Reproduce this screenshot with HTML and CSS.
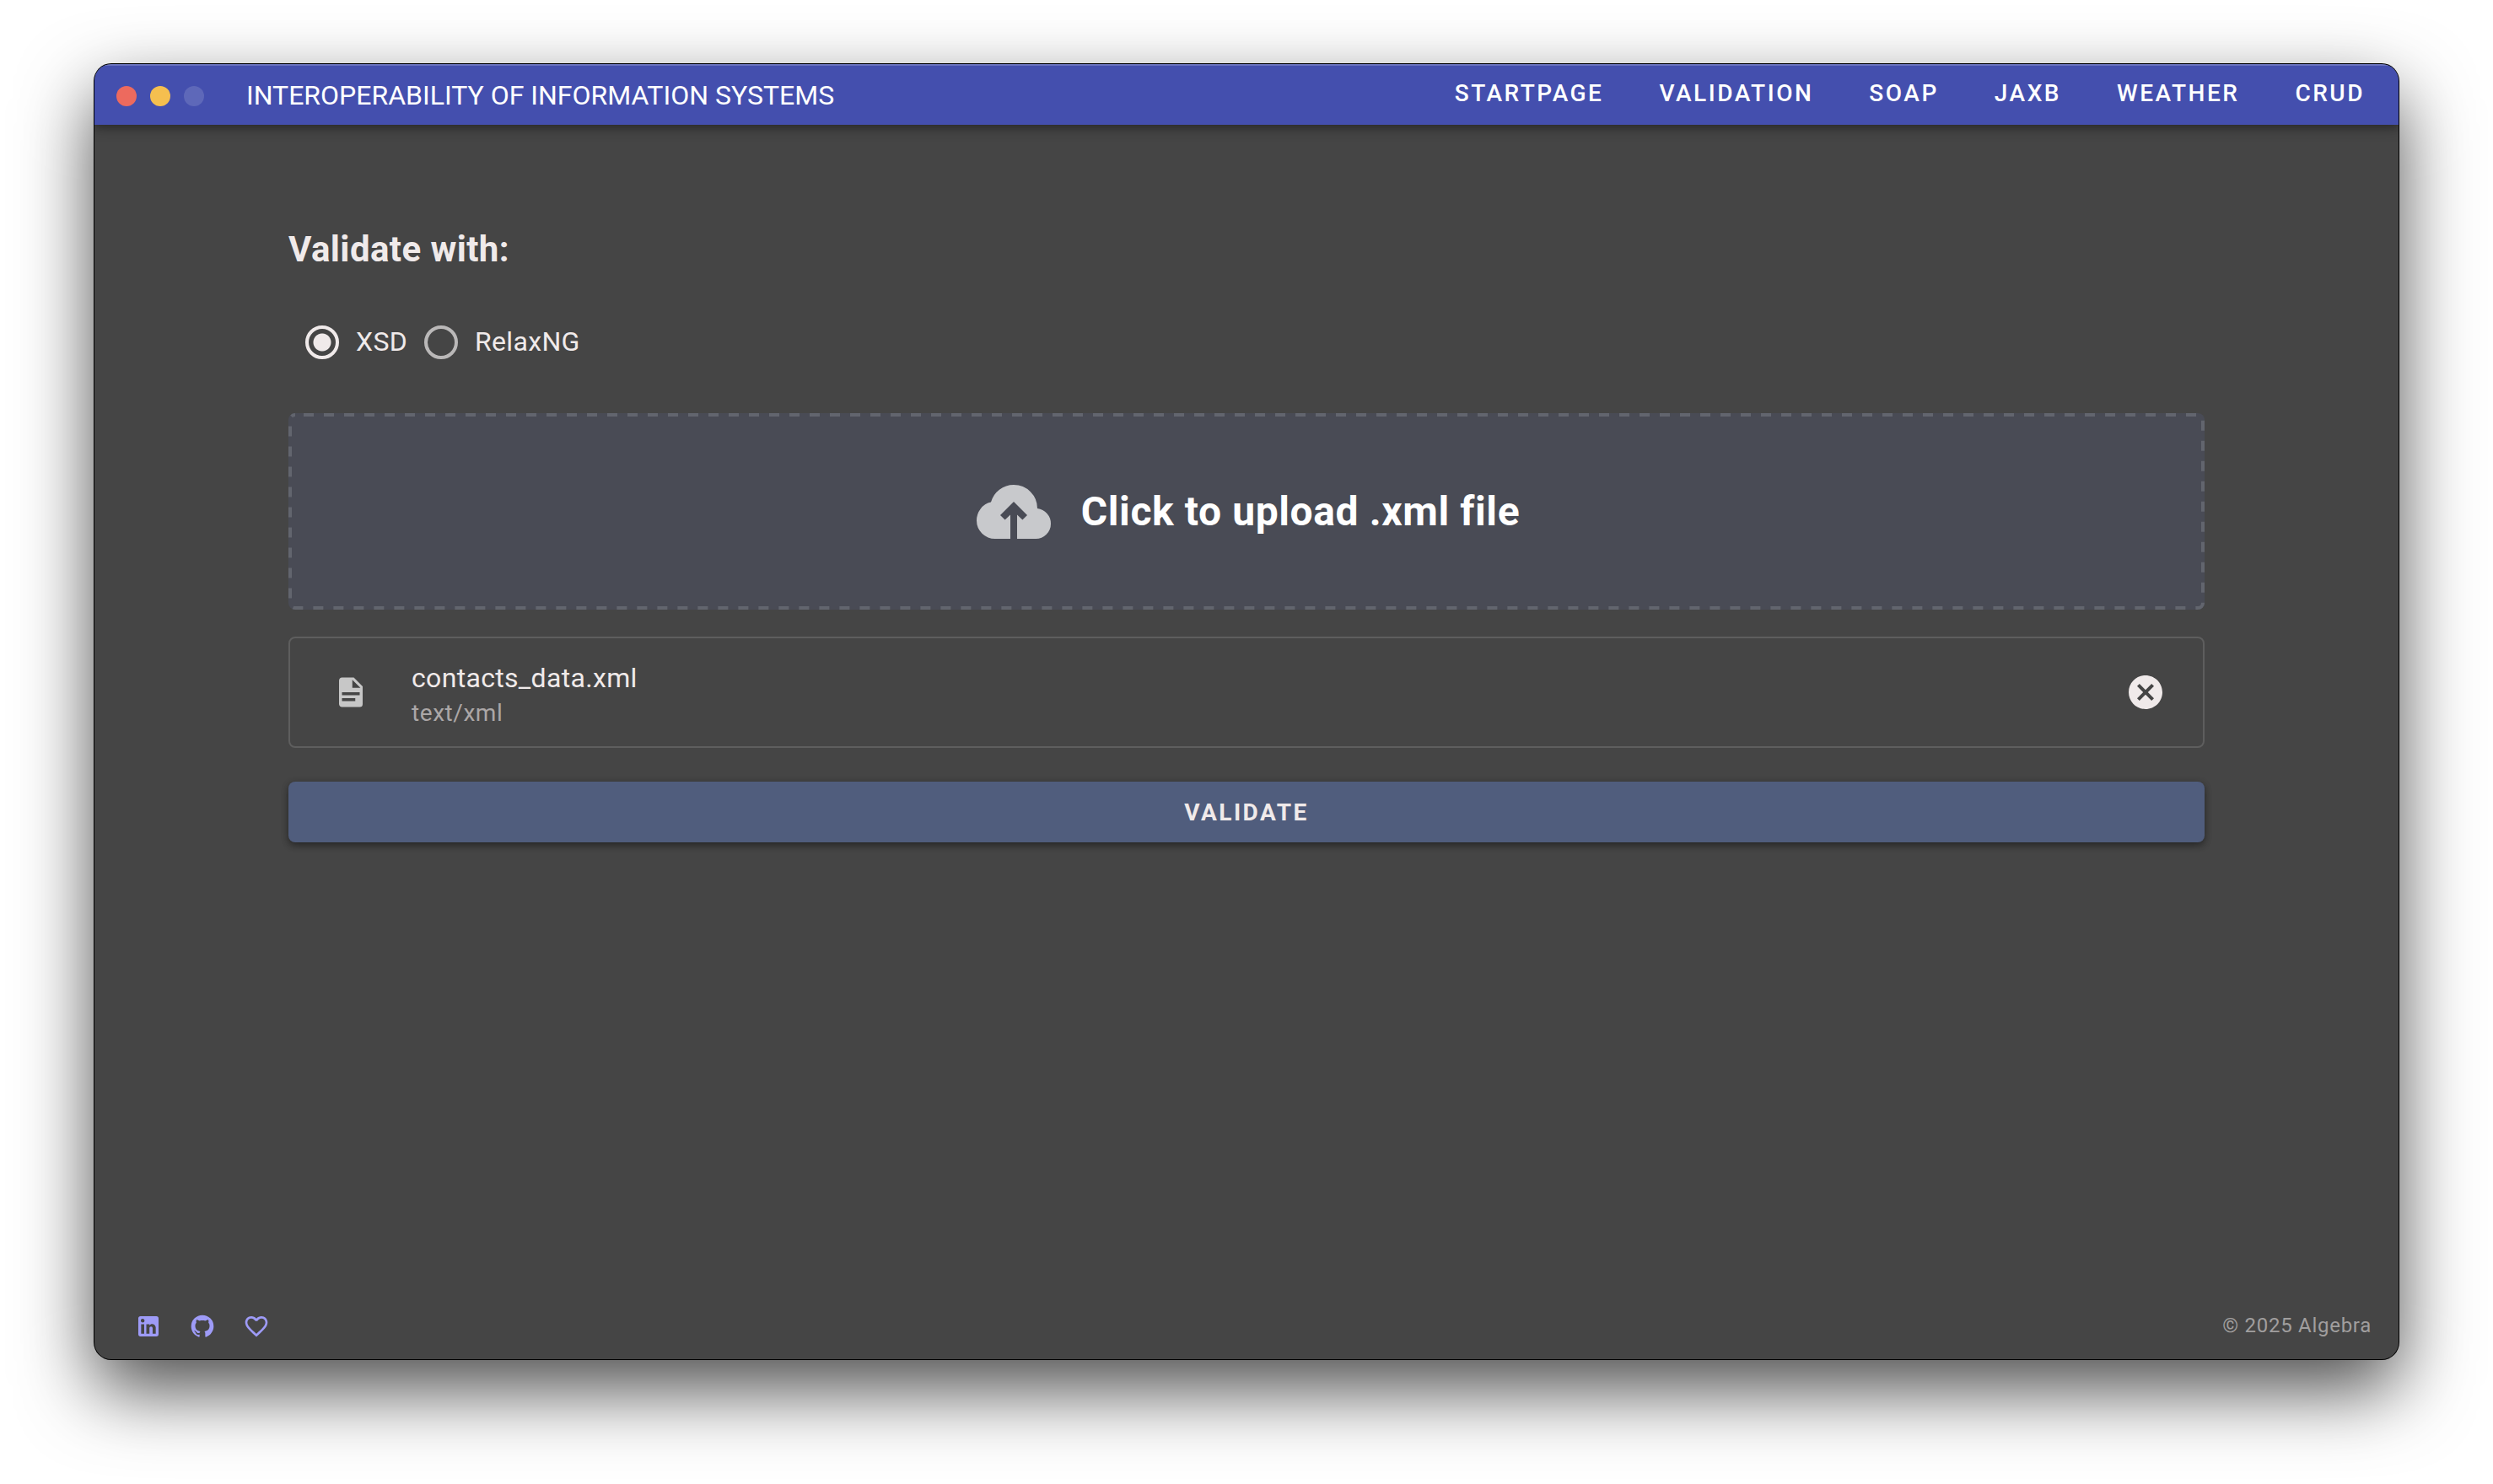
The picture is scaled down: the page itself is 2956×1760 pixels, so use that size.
FILE: index.html
```html
<!DOCTYPE html>
<html lang="en">
<head>
  <meta charset="utf-8">
  <meta name="viewport" content="width=device-width, initial-scale=1">
  <title>Interoperability of Information Systems</title>
  <link rel="stylesheet" href="styles.css">
</head>
<body>
  <div class="window">
    <header class="app-bar">
      <div class="window-controls">
        <button class="dot dot-close" type="button" aria-label="Close"></button>
        <button class="dot dot-minimize" type="button" aria-label="Minimize"></button>
        <button class="dot dot-zoom" type="button" aria-label="Zoom" disabled></button>
      </div>
      <div class="app-title">INTEROPERABILITY OF INFORMATION SYSTEMS</div>
      <nav class="nav">
        <a class="nav-link" href="#startpage">STARTPAGE</a>
        <a class="nav-link" href="#validation">VALIDATION</a>
        <a class="nav-link" href="#soap">SOAP</a>
        <a class="nav-link" href="#jaxb">JAXB</a>
        <a class="nav-link" href="#weather">WEATHER</a>
        <a class="nav-link" href="#crud">CRUD</a>
      </nav>
    </header>

    <main class="content">
      <h1 class="heading" id="validate-with">Validate with:</h1>
      <div class="radio-group" role="radiogroup" aria-labelledby="validate-with">
        <label class="radio"><input class="radio-input" type="radio" name="schema" value="xsd" checked><span class="radio-text">XSD</span></label>
        <label class="radio"><input class="radio-input" type="radio" name="schema" value="relaxng"><span class="radio-text">RelaxNG</span></label>
      </div>

      <button class="upload" type="button">
        <svg class="upload-outline" aria-hidden="true"><rect width="100%" height="100%" rx="6"/></svg>
        <svg class="upload-icon" viewBox="0 0 24 24" aria-hidden="true"><path d="M11 20H6.5q-2.28 0-3.89-1.57Q1 16.85 1 14.58q0-1.95 1.17-3.48 1.18-1.53 3.08-1.95.63-2.3 2.5-3.72Q9.63 4 12 4q2.93 0 4.96 2.04Q19 8.07 19 11q1.73.2 2.86 1.5 1.14 1.28 1.14 3 0 1.88-1.31 3.19T18.5 20H13v-7.15l1.6 1.55L16 13l-4-4-4 4 1.4 1.4 1.6-1.55Z"/></svg>
        <span>Click to upload .xml file</span>
      </button>

      <div class="file">
        <svg class="file-icon" viewBox="0 0 24 24" aria-hidden="true"><path d="M13,9H18.5L13,3.5V9M6,2H14L20,8V20A2,2 0 0,1 18,22H6C4.89,22 4,21.1 4,20V4C4,2.89 4.89,2 6,2M15,18V16H6V18H15M18,14V12H6V14H18Z"/></svg>
        <div class="file-text">
          <div class="file-name">contacts_data.xml</div>
          <div class="file-type">text/xml</div>
        </div>
        <button class="file-remove" type="button" aria-label="Remove file">
          <svg class="remove-icon" viewBox="0 0 24 24" aria-hidden="true"><path d="M12,2C17.53,2 22,6.47 22,12C22,17.53 17.53,22 12,22C6.47,22 2,17.53 2,12C2,6.47 6.47,2 12,2M15.59,7L12,10.59L8.41,7L7,8.41L10.59,12L7,15.59L8.41,17L12,13.41L15.59,17L17,15.59L13.41,12L17,8.41L15.59,7Z"/></svg>
        </button>
      </div>

      <button class="submit" type="button">VALIDATE</button>
    </main>

    <footer class="footer">
      <div class="social">
        <a class="social-link" href="#linkedin" aria-label="LinkedIn"><svg class="social-icon" viewBox="0 0 24 24" aria-hidden="true"><path d="M19 3A2 2 0 0 1 21 5V19A2 2 0 0 1 19 21H5A2 2 0 0 1 3 19V5A2 2 0 0 1 5 3H19M18.5 18.5V13.2A3.26 3.26 0 0 0 15.24 9.94C14.39 9.94 13.4 10.46 12.92 11.24V10.13H10.13V18.5H12.92V13.57C12.92 12.8 13.54 12.17 14.31 12.17A1.4 1.4 0 0 1 15.71 13.57V18.5H18.5M6.88 8.56A1.68 1.68 0 0 0 8.56 6.88C8.56 5.95 7.81 5.19 6.88 5.19A1.69 1.69 0 0 0 5.19 6.88C5.19 7.81 5.95 8.56 6.88 8.56M8.27 18.5V10.13H5.5V18.5H8.27Z"/></svg></a>
        <a class="social-link" href="#github" aria-label="GitHub"><svg class="social-icon" viewBox="0 0 24 24" aria-hidden="true"><path d="M12,2A10,10 0 0,0 2,12C2,16.42 4.87,20.17 8.84,21.5C9.34,21.58 9.5,21.27 9.5,21C9.5,20.77 9.5,20.14 9.5,19.31C6.73,19.91 6.14,17.97 6.14,17.97C5.68,16.81 5.03,16.5 5.03,16.5C4.12,15.88 5.1,15.9 5.1,15.9C6.1,15.97 6.63,16.93 6.63,16.93C7.5,18.45 8.97,18 9.54,17.76C9.63,17.11 9.89,16.67 10.17,16.42C7.95,16.17 5.62,15.31 5.62,11.5C5.62,10.39 6,9.5 6.65,8.79C6.55,8.54 6.2,7.5 6.75,6.15C6.75,6.15 7.59,5.88 9.5,7.17C10.29,6.95 11.15,6.84 12,6.84C12.85,6.84 13.71,6.95 14.5,7.17C16.41,5.88 17.25,6.15 17.25,6.15C17.8,7.5 17.45,8.54 17.35,8.79C18,9.5 18.38,10.39 18.38,11.5C18.38,15.32 16.04,16.16 13.81,16.41C14.17,16.72 14.5,17.33 14.5,18.26C14.5,19.6 14.5,20.68 14.5,21C14.5,21.27 14.66,21.59 15.17,21.5C19.14,20.16 22,16.42 22,12A10,10 0 0,0 12,2Z"/></svg></a>
        <a class="social-link" href="#favorite" aria-label="Favorite"><svg class="social-icon" viewBox="0 0 24 24" aria-hidden="true"><path d="M12.1,18.55L12,18.65L11.89,18.55C7.14,14.24 4,11.39 4,8.5C4,6.5 5.5,5 7.5,5C9.04,5 10.54,6 11.07,7.36H12.93C13.46,6 14.96,5 16.5,5C18.5,5 20,6.5 20,8.5C20,11.39 16.86,14.24 12.1,18.55M16.5,3C14.76,3 13.09,3.81 12,5.08C10.91,3.81 9.24,3 7.5,3C4.42,3 2,5.41 2,8.5C2,12.27 5.4,15.36 10.55,20.03L12,21.35L13.45,20.03C18.6,15.36 22,12.27 22,8.5C22,5.41 19.58,3 16.5,3Z"/></svg></a>
      </div>
      <div class="copyright">© 2025 Algebra</div>
    </footer>
  </div>
</body>
</html>
```
FILE: styles.css
```css
*,
*::before,
*::after {
  box-sizing: border-box;
}

body {
  margin: 0;
  padding: 76px 112px 148px;
  background: #fff;
  color: #f0eaea;
  font: 400 32px/48px Roboto, sans-serif;
}

button {
  margin: 0;
  padding: 0;
  border: 0;
  background: none;
  color: inherit;
  font: inherit;
}

svg {
  display: block;
  fill: currentColor;
}

.window {
  display: flex;
  flex-direction: column;
  min-height: calc(100vh - 224px);
  overflow: hidden;
  border-radius: 20px;
  background: #454545;
  box-shadow: 0 0 0 1px #000, 0 36px 88px rgba(0, 0, 0, 0.7);
}

/* Title bar */

.app-bar {
  display: flex;
  align-items: center;
  height: 72px;
  padding: 0 8px 0 26px;
  background: #444fae;
  color: #fff;
  box-shadow: inset 0 2px 0 rgba(255, 255, 255, 0.2), 0 4px 8px rgba(0, 0, 0, 0.2), 0 4px 16px rgba(0, 0, 0, 0.24);
}

.window-controls {
  display: flex;
  gap: 16px;
  padding-top: 4px;
}

.dot {
  width: 24px;
  height: 24px;
  border-radius: 50%;
}

.dot-close {
  background: #ed6a5e;
}

.dot-minimize {
  background: #f5bf4f;
}

.dot-zoom {
  background: #5e68b9;
}

.app-title {
  padding: 2px 0 0 50px;
}

.nav {
  display: flex;
  gap: 2px;
  margin-left: auto;
  padding-bottom: 2px;
}

.nav-link {
  padding: 0 32px;
  color: inherit;
  font-size: 28px;
  font-weight: 500;
  letter-spacing: 0.09em;
  text-decoration: none;
}

/* Validation form */

.content {
  display: flex;
  flex: 1;
  flex-direction: column;
  padding: 116px 230px 64px;
}

.heading {
  margin: 0 0 38px;
  font-size: 42px;
  font-weight: 700;
  line-height: 64px;
  letter-spacing: 0.01em;
}

.radio-group {
  display: flex;
  margin-bottom: 44px;
  letter-spacing: 0.01em;
}

.radio {
  display: flex;
  align-items: center;
  height: 80px;
}

.radio-input {
  width: 40px;
  height: 40px;
  margin: 0 20px;
  appearance: none;
  border: 4px solid #bab8b8;
  border-radius: 50%;
}

.radio-input:checked {
  border-color: #f0eaea;
  background: radial-gradient(circle, #f0eaea 10px, transparent 11px);
}

.radio-text {
  padding-bottom: 2px;
}

.upload {
  position: relative;
  display: flex;
  align-items: center;
  justify-content: center;
  gap: 32px;
  min-height: 233px;
  margin-bottom: 32px;
  border-radius: 8px;
  background: #494b55;
  color: #fff;
  font-size: 48px;
  font-weight: 700;
  line-height: 64px;
  letter-spacing: 0.0125em;
}

.upload-outline {
  position: absolute;
  inset: 2px;
  width: calc(100% - 4px);
  height: calc(100% - 4px);
  overflow: visible;
  fill: none;
  stroke: #62656e;
  stroke-width: 4px;
  stroke-dasharray: 12px;
  stroke-dashoffset: -10px;
}

.upload-icon {
  width: 96px;
  height: 96px;
  color: #c8c9cc;
}

.file {
  display: flex;
  align-items: center;
  min-height: 132px;
  margin-bottom: 40px;
  padding: 0 44px 0 51px;
  border: 2px solid #5e5e5e;
  border-radius: 8px;
}

.file-icon {
  width: 42px;
  height: 42px;
  color: #c7c7c7;
}

.file-text {
  flex: 1;
  padding: 6px 0 0 51px;
}

.file-name {
  line-height: 44px;
  letter-spacing: 0.01em;
}

.file-type {
  color: #aba7a7;
  font-size: 28px;
  line-height: 40px;
  letter-spacing: 0.02em;
}

.remove-icon {
  width: 48px;
  height: 48px;
}

.submit {
  height: 72px;
  padding-top: 2px;
  border-radius: 8px;
  background: #505d7d;
  box-shadow: 0 4px 8px rgba(0, 0, 0, 0.3), 0 2px 10px rgba(0, 0, 0, 0.2);
  font-size: 28px;
  font-weight: 700;
  letter-spacing: 0.09em;
}

/* Footer */

.footer {
  display: flex;
  align-items: center;
  justify-content: space-between;
  padding: 0 32px 14px 48px;
}

.social {
  display: flex;
  gap: 32px;
}

.social-link {
  color: #9e9bf7;
}

.social-icon {
  width: 32px;
  height: 32px;
}

.copyright {
  padding-bottom: 2px;
  color: #a09e9e;
  font-size: 24px;
  letter-spacing: 0.03em;
}
```
